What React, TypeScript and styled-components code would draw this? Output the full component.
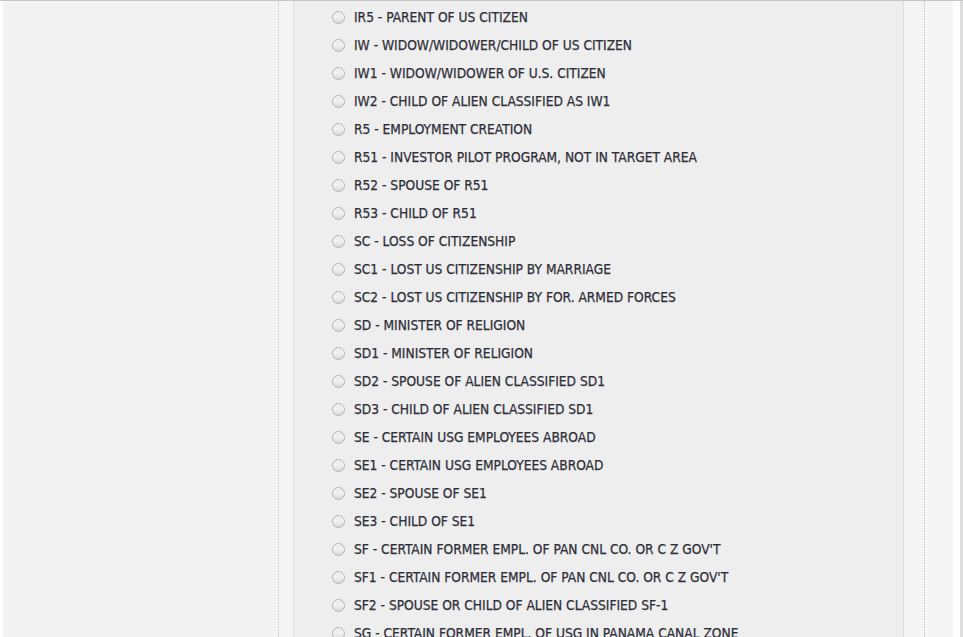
import React from "react";
import styled, { createGlobalStyle } from "styled-components";

const GlobalStyle = createGlobalStyle`
  html, body {
    margin: 0;
    padding: 0;
    background: #fff;
    overflow: hidden;
  }
`;

const visaClasses = [
  "IR5 - PARENT OF US CITIZEN",
  "IW - WIDOW/WIDOWER/CHILD OF US CITIZEN",
  "IW1 - WIDOW/WIDOWER OF U.S. CITIZEN",
  "IW2 - CHILD OF ALIEN CLASSIFIED AS IW1",
  "R5 - EMPLOYMENT CREATION",
  "R51 - INVESTOR PILOT PROGRAM, NOT IN TARGET AREA",
  "R52 - SPOUSE OF R51",
  "R53 - CHILD OF R51",
  "SC - LOSS OF CITIZENSHIP",
  "SC1 - LOST US CITIZENSHIP BY MARRIAGE",
  "SC2 - LOST US CITIZENSHIP BY FOR. ARMED FORCES",
  "SD - MINISTER OF RELIGION",
  "SD1 - MINISTER OF RELIGION",
  "SD2 - SPOUSE OF ALIEN CLASSIFIED SD1",
  "SD3 - CHILD OF ALIEN CLASSIFIED SD1",
  "SE - CERTAIN USG EMPLOYEES ABROAD",
  "SE1 - CERTAIN USG EMPLOYEES ABROAD",
  "SE2 - SPOUSE OF SE1",
  "SE3 - CHILD OF SE1",
  "SF - CERTAIN FORMER EMPL. OF PAN CNL CO. OR C Z GOV'T",
  "SF1 - CERTAIN FORMER EMPL. OF PAN CNL CO. OR C Z GOV'T",
  "SF2 - SPOUSE OR CHILD OF ALIEN CLASSIFIED SF-1",
  "SG - CERTAIN FORMER EMPL. OF USG IN PANAMA CANAL ZONE",
];

const App = () => {
  return (
    <>
      <GlobalStyle />
      <PageBlock>
        <Sidebar />
        <MainColumn>
          <OptionPanel>
            {visaClasses.map((label) => (
              <OptionRow key={label}>
                <Radio />
                <OptionLabel>{label}</OptionLabel>
              </OptionRow>
            ))}
          </OptionPanel>
        </MainColumn>
        <RightGutter>
          <div className="inner" />
        </RightGutter>
        <EdgeStrip />
        <Scrollbar />
      </PageBlock>
    </>
  );
};

const PageBlock = styled.div`
  display: flex;
  height: 100vh;
  overflow: hidden;
  border-top: 1px solid #c6c6c6;
  box-sizing: border-box;
  padding-left: 3px;
  background: #fff;
`;

const Sidebar = styled.div`
  width: 275px;
  flex-shrink: 0;
  background: #f3f3f3;
  border-right: 1px dotted #c4c4c4;
`;

const MainColumn = styled.div`
  width: 625px;
  flex-shrink: 0;
  background: #f5f5f5;
  padding-left: 14px;
  box-sizing: border-box;
  display: flex;
`;

const OptionPanel = styled.div`
  flex: 1;
  background: #eeeeee;
  border-left: 1px solid #e2e2e2;
  border-right: 1px solid #dcdcdc;
  padding: 2px 0 0 38px;
`;

const OptionRow = styled.label`
  display: flex;
  align-items: center;
  height: 28px;
  gap: 9px;
`;

const Radio = styled.span`
  width: 11px;
  height: 11px;
  border-radius: 50%;
  border: 1px solid #b3b3b3;
  background: linear-gradient(180deg, #e6e6e6 0%, #f2f2f2 45%, #d9d9d9 100%);
  box-shadow: inset 0 1px 1px rgba(255, 255, 255, 0.8);
  flex-shrink: 0;
`;

const OptionLabel = styled.span`
  font-family: "DejaVu Sans Condensed", "DejaVu Sans", sans-serif;
  font-stretch: condensed;
  font-size: 13.65px;
  color: #2f2f3a;
  -webkit-text-stroke: 0.25px #2f2f3a;
  white-space: nowrap;
`;

const RightGutter = styled.div`
  width: 49px;
  flex-shrink: 0;
  background: #f5f5f5;
  .inner {
    width: 20px;
    height: 100%;
    border-right: 1px dotted #c4c4c4;
  }
`;

const EdgeStrip = styled.div`
  width: 7px;
  flex-shrink: 0;
  background: #fff;
`;

const Scrollbar = styled.div`
  flex: 1;
  background: #dedede;
`;

export default App;
